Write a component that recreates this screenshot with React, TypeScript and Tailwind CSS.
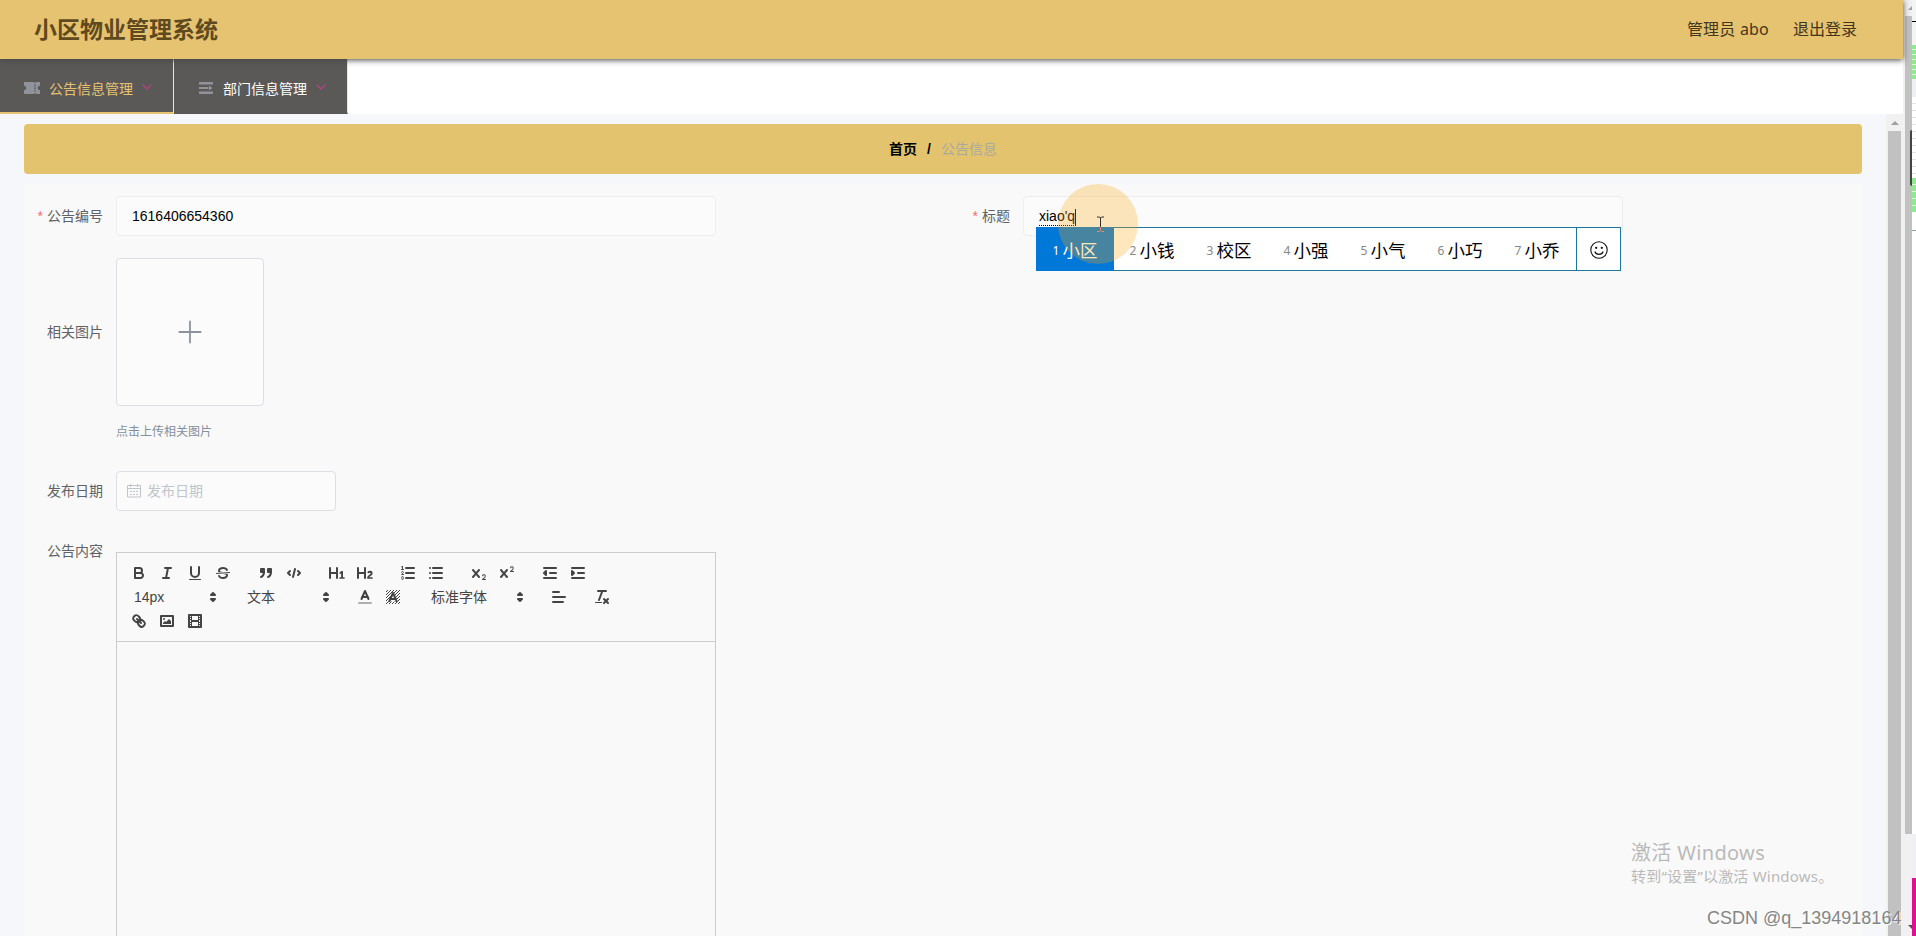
import React from 'react';

const CJK = "font-['Noto_Sans','Noto_Sans_CJK_SC',sans-serif]";

const Ic = ({ children }: { children: React.ReactNode }) => (
  <button className="block h-6 w-7 px-[5px] py-[3px] text-[#444]">
    <svg viewBox="0 0 18 18" className="h-[18px] w-[18px]" fill="none" stroke="currentColor" strokeWidth="2" strokeLinecap="round" strokeLinejoin="round">
      {children}
    </svg>
  </button>
);

const Group = ({ children }: { children: React.ReactNode }) => <span className="mr-[15px] flex">{children}</span>;

const Picker = ({ label, width }: { label: string; width: string }) => (
  <span className={`flex h-6 items-center justify-between pl-[9px] pr-px text-sm text-[#444] ${width}`}>
    <span className="leading-6">{label}</span>
    <svg viewBox="0 0 18 18" className="h-[18px] w-[18px]" fill="#444" stroke="#444" strokeWidth="2" strokeLinejoin="round">
      <polygon points="7 11 9 13 11 11 7 11" />
      <polygon points="7 7 9 5 11 7 7 7" />
    </svg>
  </span>
);

const Toolbar = () => (
  <div className="flex h-[90px] flex-wrap content-start border border-[#ccc] p-2">
    <Group>
      <Ic>
        <path d="M5,4H9.5A2.5,2.5,0,0,1,12,6.5v0A2.5,2.5,0,0,1,9.5,9H5A0,0,0,0,1,5,9V4A0,0,0,0,1,5,4Z" />
        <path d="M5,9h5.5A2.5,2.5,0,0,1,13,11.5v0A2.5,2.5,0,0,1,10.5,14H5a0,0,0,0,1,0,0V9A0,0,0,0,1,5,9Z" />
      </Ic>
      <Ic>
        <line x1="7" x2="13" y1="4" y2="4" />
        <line x1="5" x2="11" y1="14" y2="14" />
        <line x1="8" x2="10" y1="14" y2="4" />
      </Ic>
      <Ic>
        <path d="M5,3V9a4.012,4.012,0,0,0,4,4H9a4.012,4.012,0,0,0,4-4V3" />
        <rect x="3" y="15" width="12" height="1" rx=".5" fill="currentColor" stroke="none" />
      </Ic>
      <Ic>
        <line x1="15.5" x2="2.5" y1="8.5" y2="9.5" strokeWidth="1" />
        <g fill="currentColor" stroke="none">
          <path d="M9.007,8C6.542,7.791,6,7.519,6,6.5,6,5.792,7.283,5,9,5c1.571,0,2.765.679,2.969,1.309a1,1,0,0,0,1.9-.617C13.356,4.106,11.354,3,9,3,6.2,3,4,4.538,4,6.5a3.2,3.2,0,0,0,.5,1.843Z" />
          <path d="M8.984,10C11.457,10.208,12,10.479,12,11.5c0,0.708-1.283,1.5-3,1.5-1.571,0-2.765-.679-2.969-1.309a1,1,0,1,0-1.9.617C4.644,13.894,6.646,15,9,15c2.8,0,5-1.538,5-3.5a3.2,3.2,0,0,0-.5-1.843Z" />
        </g>
      </Ic>
    </Group>
    <Group>
      <Ic>
        <g fill="currentColor">
          <rect height="3" width="3" x="4" y="5" />
          <rect height="3" width="3" x="11" y="5" />
          <path d="M7,8c0,4.031-3,5-3,5" />
          <path d="M14,8c0,4.031-3,5-3,5" />
        </g>
      </Ic>
      <Ic>
        <polyline points="5 7 3 9 5 11" />
        <polyline points="13 7 15 9 13 11" />
        <line x1="10" x2="8" y1="5" y2="13" />
      </Ic>
    </Group>
    <Group>
      <Ic>
        <path fill="currentColor" stroke="none" d="M10,4V14a1,1,0,0,1-2,0V10H3v4a1,1,0,0,1-2,0V4A1,1,0,0,1,3,4V8H8V4a1,1,0,0,1,2,0Zm6.06787,9.209H14.98975V7.59863a.54085.54085,0,0,0-.605-.60547h-.62744a1.01119,1.01119,0,0,0-.748.29688L11.645,8.56641a.5435.5435,0,0,0-.022.8584l.28613.30762a.53861.53861,0,0,0,.84717.0332l.09912-.08789a1.2137,1.2137,0,0,0,.2417-.35254h.02246s-.01123.30859-.01123.60547V13.209H12.041a.54085.54085,0,0,0-.605.60547v.43945a.54085.54085,0,0,0,.605.60547h4.02686a.54085.54085,0,0,0,.605-.60547v-.43945A.54085.54085,0,0,0,16.06787,13.209Z" />
      </Ic>
      <Ic>
        <path fill="currentColor" stroke="none" d="M16.73975,13.81445v.43945a.54085.54085,0,0,1-.605.60547H11.855a.58392.58392,0,0,1-.64893-.60547V14.0127c0-2.90527,3.39941-3.42187,3.39941-4.55469a.77675.77675,0,0,0-.84717-.78125,1.17684,1.17684,0,0,0-.83594.38477c-.2749.26367-.561.374-.85791.13184l-.4292-.34082c-.30811-.24219-.38525-.51758-.1543-.81445a2.97155,2.97155,0,0,1,2.45361-1.17676,2.45393,2.45393,0,0,1,2.68408,2.40918c0,2.45312-3.1792,2.92676-3.27832,3.93848h2.79443A.54085.54085,0,0,1,16.73975,13.81445ZM9,3A.99974.99974,0,0,0,8,4V8H3V4A1,1,0,0,0,1,4V14a1,1,0,0,0,2,0V10H8v4a1,1,0,0,0,2,0V4A.99974.99974,0,0,0,9,3Z" />
      </Ic>
    </Group>
    <Group>
      <Ic>
        <line x1="7" x2="15" y1="4" y2="4" />
        <line x1="7" x2="15" y1="9" y2="9" />
        <line x1="7" x2="15" y1="14" y2="14" />
        <line x1="2.5" x2="4.5" y1="5.5" y2="5.5" strokeWidth="1" />
        <path fill="currentColor" stroke="none" d="M3.5,6A0.5,0.5,0,0,1,3,5.5V3.085l-0.276.138A0.5,0.5,0,0,1,2.053,3c-0.124-.247-0.023-0.324.224-0.447l1-.5A0.5,0.5,0,0,1,4,2.5v3A0.5,0.5,0,0,1,3.5,6Z" />
        <path strokeWidth="1" d="M4.5,10.5h-2c0-.234,1.85-1.076,1.85-2.234A0.959,0.959,0,0,0,2.5,8.156" />
        <path strokeWidth="1" d="M2.5,14.846a0.959,0.959,0,0,0,1.85-.109A0.7,0.7,0,0,0,3.75,14a0.688,0.688,0,0,0,.6-0.736,0.959,0.959,0,0,0-1.85-.109" />
      </Ic>
      <Ic>
        <line x1="6" x2="15" y1="4" y2="4" />
        <line x1="6" x2="15" y1="9" y2="9" />
        <line x1="6" x2="15" y1="14" y2="14" />
        <line x1="3" x2="3" y1="4" y2="4" />
        <line x1="3" x2="3" y1="9" y2="9" />
        <line x1="3" x2="3" y1="14" y2="14" />
      </Ic>
    </Group>
    <Group>
      <Ic>
        <g fill="currentColor" stroke="none">
          <path d="M15.5,15H13.861a3.858,3.858,0,0,0,1.914-2.975,1.8,1.8,0,0,0-1.6-1.751A1.921,1.921,0,0,0,12.021,11.7a0.50013,0.50013,0,1,0,.957.291h0a0.914,0.914,0,0,1,1.053-.725,0.81,0.81,0,0,1,.744.762c0,1.076-1.16971,1.86982-1.93971,2.43082A1.45639,1.45639,0,0,0,12,15.5a0.5,0.5,0,0,0,.5.5h3A0.5,0.5,0,0,0,15.5,15Z" />
          <path d="M9.65,5.241a1,1,0,0,0-1.409.108L6,7.964,3.759,5.349A1,1,0,0,0,2.192,6.59178Q2.21541,6.6213,2.241,6.649L4.684,9.5,2.241,12.35A1,1,0,0,0,3.71,13.70722q0.02557-.02768.049-0.05722L6,11.036,8.241,13.65a1,1,0,1,0,1.567-1.24277Q9.78459,12.3777,9.759,12.35L7.316,9.5,9.759,6.651A1,1,0,0,0,9.65,5.241Z" />
        </g>
      </Ic>
      <Ic>
        <g fill="currentColor" stroke="none">
          <path d="M15.5,7H13.861a4.015,4.015,0,0,0,1.914-2.975,1.8,1.8,0,0,0-1.6-1.751A1.922,1.922,0,0,0,12.021,3.7a0.5,0.5,0,1,0,.957.291,0.917,0.917,0,0,1,1.053-.725,0.81,0.81,0,0,1,.744.762c0,1.077-1.164,1.925-1.934,2.486A1.423,1.423,0,0,0,12,7.5a0.5,0.5,0,0,0,.5.5h3A0.5,0.5,0,0,0,15.5,7Z" />
          <path d="M9.651,5.241a1,1,0,0,0-1.41.108L6,7.964,3.759,5.349a1,1,0,1,0-1.519,1.3L4.683,9.5,2.241,12.35a1,1,0,1,0,1.519,1.3L6,11.036,8.241,13.65a1,1,0,0,0,1.519-1.3L7.317,9.5,9.759,6.651A1,1,0,0,0,9.651,5.241Z" />
        </g>
      </Ic>
    </Group>
    <Group>
      <Ic>
        <line x1="3" x2="15" y1="14" y2="14" />
        <line x1="3" x2="15" y1="4" y2="4" />
        <line x1="9" x2="15" y1="9" y2="9" />
        <polyline points="5 7 5 11 3 9 5 7" fill="currentColor" />
      </Ic>
      <Ic>
        <line x1="3" x2="15" y1="14" y2="14" />
        <line x1="3" x2="15" y1="4" y2="4" />
        <line x1="9" x2="15" y1="9" y2="9" />
        <polyline points="3 7 3 11 5 9 3 7" fill="currentColor" />
      </Ic>
    </Group>
    <Group>
      <Picker label="14px" width="w-[98px]" />
    </Group>
    <Group>
      <Picker label="文本" width="w-[98px]" />
    </Group>
    <Group>
      <Ic>
        <line x1="3" x2="15" y1="15" y2="15" opacity=".4" />
        <polyline points="5.5 11 9 3 12.5 11" />
        <line x1="11.63" x2="6.38" y1="9" y2="9" />
      </Ic>
      <Ic>
        <defs>
          <pattern id="hatch" width="3" height="3" patternUnits="userSpaceOnUse">
            <path d="M-1,1 L1,-1 M0,3 L3,0 M2,4 L4,2" stroke="#444" strokeWidth="1" />
          </pattern>
        </defs>
        <rect width="14" height="14" x="2" y="2" fill="url(#hatch)" stroke="none" />
        <path d="M5.5,13.5L9,5.5L12.5,13.5Z" fill="#f9f9f9" stroke="none" />
        <polyline points="5.5 13 9 5 12.5 13" />
        <line x1="11.63" x2="6.38" y1="11" y2="11" />
      </Ic>
    </Group>
    <Group>
      <Picker label="标准字体" width="w-[108px]" />
    </Group>
    <Group>
      <Ic>
        <line x1="3" x2="15" y1="9" y2="9" />
        <line x1="3" x2="13" y1="14" y2="14" />
        <line x1="3" x2="9" y1="4" y2="4" />
      </Ic>
    </Group>
    <Group>
      <Ic>
        <line x1="5" x2="13" y1="3" y2="3" />
        <line x1="6" x2="9.35" y1="12" y2="3" />
        <line x1="11" x2="15" y1="11" y2="15" />
        <line x1="15" x2="11" y1="11" y2="15" />
        <rect height="1" rx=".5" width="7" x="2" y="14" fill="currentColor" stroke="none" />
      </Ic>
    </Group>
    <Group>
      <Ic>
        <line x1="7" x2="11" y1="7" y2="11" />
        <path d="M8.9,4.577a3.476,3.476,0,0,1,.36,4.679A3.476,3.476,0,0,1,4.577,8.9C3.185,7.5,2.035,6.4,4.217,4.217S7.5,3.185,8.9,4.577Z" />
        <path d="M13.423,9.1a3.476,3.476,0,0,0-4.679-.36,3.476,3.476,0,0,0,.36,4.679c1.392,1.392,2.5,2.542,4.679.36S14.815,10.5,13.423,9.1Z" />
      </Ic>
      <Ic>
        <rect height="10" width="12" x="3" y="4" />
        <circle cx="6" cy="7" r="1" fill="currentColor" stroke="none" />
        <polyline points="5 12 5 11 7 9 8 10 11 7 13 9 13 12 5 12" fill="currentColor" stroke="none" />
      </Ic>
      <Ic>
        <rect height="12" width="12" x="3" y="3" />
        <g fill="currentColor" stroke="none">
          <rect height="12" width="1" x="5" y="3" />
          <rect height="12" width="1" x="12" y="3" />
          <rect height="2" width="8" x="5" y="8" />
          <rect height="1" width="3" x="3" y="5" />
          <rect height="1" width="3" x="3" y="7" />
          <rect height="1" width="3" x="3" y="10" />
          <rect height="1" width="3" x="3" y="12" />
          <rect height="1" width="3" x="12" y="5" />
          <rect height="1" width="3" x="12" y="7" />
          <rect height="1" width="3" x="12" y="10" />
          <rect height="1" width="3" x="12" y="12" />
        </g>
      </Ic>
    </Group>
  </div>
);

const Label = ({ text, required }: { text: string; required?: boolean }) => (
  <label className="w-20 shrink-0 whitespace-nowrap pr-[13px] text-right text-sm leading-10 text-[#606266]">
    {required && <span className="mr-1 text-[#f56c6c]">*</span>}
    {text}
  </label>
);

const Chevron = () => (
  <svg viewBox="0 0 10 6" className="mb-0.5 ml-[9px] h-1.5 w-2.5" fill="none" stroke="#b0447c" strokeWidth="1.3">
    <path d="M.7 .7L5 5L9.3 .7" />
  </svg>
);

const Nav = () => (
  <nav className="flex h-[55px] bg-white text-sm">
    <div className="flex w-[174px] items-center border-r border-b-2 border-r-[#e6e6e6] border-b-[#e6c370] bg-[#5b5958] pt-1 pl-6 text-[#e6c370]">
      <svg viewBox="0 0 16 12" className="mr-[9px] h-3 w-4" fill="#909399">
        <path d="M0 0H9.6A1.6 1.6 0 0 0 12.4 0H16V3.8A2.2 2.2 0 0 0 16 8.2V12H12.4A1.6 1.6 0 0 0 9.6 12H0V8.2A2.2 2.2 0 0 0 0 3.8Z" />
        <path d="M11 2.4V9.6" stroke="#5b5958" strokeWidth="1.2" strokeDasharray="2 .8" />
      </svg>
      <span className="mt-0.5">公告信息管理</span>
      <Chevron />
    </div>
    <div className="flex w-[174px] items-center border-r border-b-2 border-r-[#e6e6e6] border-b-[#5b5958] bg-[#5b5958] pt-1 pl-[25px] text-white">
      <svg viewBox="0 0 14 12" className="mr-[10px] h-3 w-3.5" fill="#909399">
        <path d="M0 0H14V2.4H0ZM0 4.9H9.5V7.1H0ZM0 9.6H14V12H0ZM10 3.4L13.6 6L10 8.6Z" />
      </svg>
      <span className="mt-0.5">部门信息管理</span>
      <Chevron />
    </div>
  </nav>
);

const words = ['小区', '小钱', '校区', '小强', '小气', '小巧', '小乔'];

// Candidate window of the input method, floating over the title field
const Ime = () => (
  <div className={`absolute left-[1036px] top-[227px] flex h-11 w-[585px] border border-[#1c7898] bg-white ${CJK}`}>
    {words.map((w, i) => (
      <div
        key={w}
        className={`-ml-px flex w-[78px] items-center justify-center whitespace-nowrap pt-0.5 ${i === 0 ? '-my-px bg-[#0078d7] text-white' : 'text-black'}`}
      >
        <span className={`mr-[3px] mt-0.5 text-xs ${i === 0 ? '' : 'text-[#888]'}`}>{i + 1}</span>
        <span className="text-[17.5px]">{w}</span>
      </div>
    ))}
    <div className="ml-auto flex w-11 items-center justify-center border-l border-[#1c7898]">
      <svg viewBox="0 0 18 18" className="mt-0.5 h-[18px] w-[18px]" fill="none" stroke="#111" strokeWidth="1.1">
        <circle cx="9" cy="9" r="8.2" />
        <path d="M4.8 10.5C6 14.3 12 14.3 13.2 10.5" />
        <circle cx="6.2" cy="6.8" r=".6" fill="#111" />
        <circle cx="11.8" cy="6.8" r=".6" fill="#111" />
      </svg>
    </div>
  </div>
);

const Form = () => (
  <div className="mt-2.5 h-[900px] bg-[#f9f9f9] px-3 pt-3">
    <div className="flex h-[62px]">
      <div className="flex w-[907px]">
        <Label text="公告编号" required />
        <div className="h-10 w-[600px] rounded border border-[#eee] bg-[#fbfbfb] px-[15px] text-sm leading-[38px] text-black">1616406654360</div>
      </div>
      <div className="flex">
        <Label text="标题" required />
        <div className="h-10 w-[600px] rounded border border-[#eee] bg-[#fbfbfb] px-[15px] text-sm leading-[38px] text-black">
          <span className="inline-block h-[17px] border-b border-dotted border-black border-r border-r-black leading-[15px] [border-right-style:solid]">xiao'q</span>
        </div>
      </div>
    </div>
    <div className="flex h-[213px]">
      <div className="flex w-20 shrink-0 pt-[54px]">
        <Label text="相关图片" />
      </div>
      <div>
        <div className="flex h-[148px] w-[148px] items-center justify-center rounded-[4px] border border-[#dcdfe6] bg-[#fbfbfb]">
          <svg viewBox="0 0 24 24" className="h-6 w-6" stroke="#8c939d" strokeWidth="1.8">
            <path d="M12 .7V23.3M.7 12H23.3" />
          </svg>
        </div>
        <div className="mt-[18px] text-xs leading-4 text-[#838fa1]">点击上传相关图片</div>
      </div>
    </div>
    <div className="flex h-[60px]">
      <Label text="发布日期" />
      <div className="flex h-10 w-[220px] items-center rounded border border-[#dcdfe6] bg-[#fbfbfb] pl-2.5 text-sm text-[#c0c4cc]">
        <svg viewBox="0 0 14 14" className="mr-1.5 h-3.5 w-3.5" fill="none" stroke="#c0c4cc">
          <path d="M.5 1.5H13.5V13H.5ZM.5 4.5H13.5M3.5 0V3M10.5 0V3M3 7.5H5M6 7.5H8M9 7.5H11M3 10.5H5M6 10.5H8M9 10.5H11" />
        </svg>
        发布日期
      </div>
    </div>
    <div className="flex">
      <Label text="公告内容" />
      <div className="mt-[21px] w-[600px]">
        <Toolbar />
        <div className="h-[400px] border border-t-0 border-[#ccc]" />
      </div>
    </div>
  </div>
);

// Sliver of the window that sits behind the browser
const Sliver = () => (
  <div className="flex h-full w-1 shrink-0 flex-col bg-white">
    <div className="h-[21px] bg-[#f4f4f8]" />
    <div className="h-px bg-black" />
    <div className="h-[23px] bg-[#f4f4f8]" />
    <div className="h-[34px] bg-[repeating-linear-gradient(#90e890_0_4px,#d8f8d8_4px_5px)]" />
    <div className="h-[18px] bg-[#eef0f6]" />
    <div className="h-[81px] bg-[repeating-linear-gradient(#fff_0_6px,#e4e4e8_6px_7px)]" />
    <div className="h-[34px] bg-[repeating-linear-gradient(#90e890_0_6px,#d8f8d8_6px_7px)]" />
    <div className="h-[18px] bg-white" />
    <div className="h-px bg-[#8ca0b0]" />
    <div className="h-[603px] bg-white" />
    <div className="h-11 bg-[#f0f0f4]" />
    <div className="h-[58px] bg-[#e01090]" />
  </div>
);

const App = () => {
  return (
    <div className="relative flex h-[936px] w-[1916px] overflow-hidden bg-white font-['Liberation_Sans','Noto_Sans_CJK_SC',sans-serif]">
      <div className="flex w-[1903px] shrink-0 flex-col">
        <header className={`z-10 flex h-[59px] shrink-0 items-center justify-between bg-[#e6c370] pl-[34px] pr-[46px] shadow-[0_1px_6px_#444] ${CJK}`}>
          <h1 className="text-[23px] font-bold text-[#5f4a20]">小区物业管理系统</h1>
          <div className="flex gap-6 pb-px text-base text-[#44361c]">
            <span className="tracking-[0.2px]">管理员 abo</span>
            <span>退出登录</span>
          </div>
        </header>
        <Nav />
        <div className="flex h-[822px] overflow-hidden bg-[#f5f7fb]">
          <main className="w-[1862px] pl-6 pt-2.5">
            <div className="flex h-[50px] items-center justify-center rounded bg-[#e4c36f] text-sm">
              <span className="font-bold text-black">首页</span>
              <span className="mx-[10px] font-bold text-black">/</span>
              <span className="text-[#a9a9a0]">公告信息</span>
            </div>
            <Form />
          </main>
          <div className="ml-6 flex w-[17px] flex-col items-center bg-[#f1f1f1]">
            <div className="flex h-[17px] items-center">
              <svg viewBox="0 0 8 4" className="h-1 w-2" fill="#a0a0a0">
                <path d="M4 0L8 4H0Z" />
              </svg>
            </div>
            <div className="w-[13px] grow bg-[#c1c1c1]" />
          </div>
        </div>
      </div>
      <div className="flex w-[9px] shrink-0 flex-col bg-[#f1f1f1] pl-0.5">
        <div className="flex h-4 items-center justify-end">
          <svg viewBox="0 0 4 4" className="h-1 w-1" fill="#a0a0a0">
            <path d="M4 0V4H0Z" />
          </svg>
        </div>
        <div className="h-[818px] bg-[#c1c1c1]" />
        <div className="mt-[91px] flex justify-end">
          <svg viewBox="0 0 4 4" className="h-1 w-1" fill="#505050">
            <path d="M0 0H4V4Z" />
          </svg>
        </div>
      </div>
      <Sliver />
      <div className="absolute left-[1910px] top-[130px] h-14 w-0.5 rounded-l bg-[#444]" />

      <Ime />
      <div className="absolute left-[1058px] top-[184px] h-20 w-20 rounded-full bg-[rgba(250,166,19,0.28)]" />
      <svg viewBox="0 0 7 16" className="absolute left-[1097px] top-[216px] h-4 w-[7px]" fill="none" stroke="#333">
        <path d="M0 1H2.5L3.5 2L4.5 1H7M3.5 1.5V11" />
        <path d="M3.5 11V15M0 15.5H2.5L3.5 14.5L4.5 15.5H7" stroke="#e0906a" />
      </svg>

      <div className={`absolute left-[1631px] top-[839px] whitespace-nowrap text-[#b9b9b9] ${CJK}`}>
        <div className="text-[20px] leading-7 tracking-[0.35px]">激活 Windows</div>
        <div className="-mt-0.5 text-[15px] leading-[22px] tracking-[0.2px]">转到“设置”以激活 Windows。</div>
      </div>
      <div className="absolute left-[1707px] top-[906px] whitespace-nowrap text-[18px] leading-6 text-[#858585] [text-shadow:1px_1px_0_#fff]">CSDN @q_1394918164</div>
    </div>
  );
};

export default App;
